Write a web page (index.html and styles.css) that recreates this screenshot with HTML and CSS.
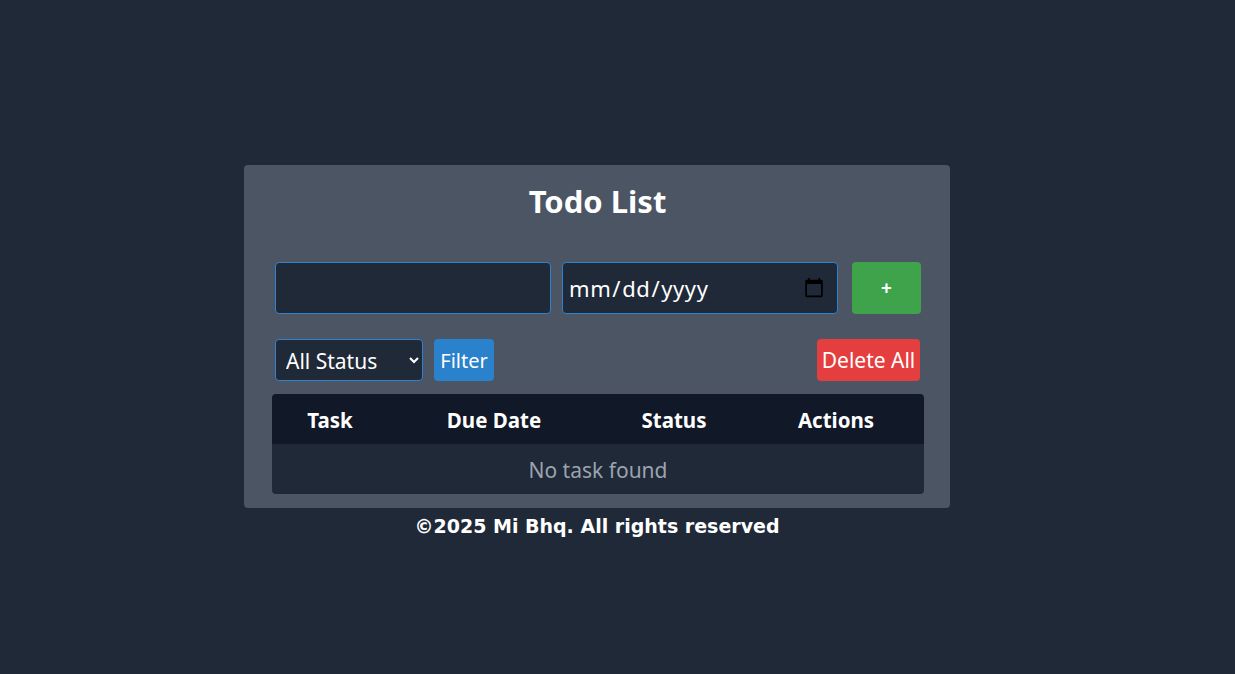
FILE: index.html
```
<!DOCTYPE html>
<html>
<head>
<meta charset="utf-8">
<link rel="stylesheet" href="styles.css">
</head>
<body>
<div class="page">
  <div class="card">
    <h1 class="title">Todo List</h1>
    <div class="add-row">
      <input class="field" type="text">
      <input class="field date" type="date">
      <button class="btn add">+</button>
    </div>
    <div class="filter-row">
      <div class="filter-left">
        <select class="select">
          <option>All Status</option>
        </select>
        <button class="btn filter">Filter</button>
      </div>
      <button class="btn delete">Delete All</button>
    </div>
    <table class="table">
      <colgroup>
        <col class="c1"><col class="c2"><col class="c3"><col class="c4">
      </colgroup>
      <thead>
        <tr><th>Task</th><th>Due Date</th><th>Status</th><th>Actions</th></tr>
      </thead>
      <tbody>
        <tr><td colspan="4" class="empty">No task found</td></tr>
      </tbody>
    </table>
  </div>
  <p class="footer">©2025 Mi Bhq. All rights reserved</p>
</div>
</body>
</html>
```
FILE: styles.css
```
html, body {
  margin: 0;
  padding: 0;
  background: #1f2937;
  font-family: "Noto Sans", "Open Sans", sans-serif;
  color: #fff;
}
.page {
  width: 1194px;
  display: flex;
  flex-direction: column;
  align-items: center;
  padding-top: 165px;
}
.card {
  width: 706px;
  height: 343px;
  box-sizing: border-box;
  background: #4b5563;
  border-radius: 4px;
  padding: 17px 27px 0 28px;
}
.title {
  margin: 0;
  text-align: center;
  font-size: 31px;
  font-weight: 700;
  line-height: 38px;
}
.add-row {
  display: flex;
  align-items: center;
  margin-top: 42px;
  padding: 0 2px 0 3px;
  gap: 11px;
}
.field {
  flex-shrink: 0;
  width: 276px;
  height: 52px;
  box-sizing: border-box;
  background: #1f2937;
  border: 1px solid #3182ce;
  border-radius: 4px;
  color: #fff;
  font-family: inherit;
  font-size: 20px;
  padding: 0 10px;
  outline: none;
}
.date {
  color-scheme: light;
  font-size: 22px;
  padding: 0 10px 0 5px;
  letter-spacing: 0.6px;
}
.btn {
  flex-shrink: 0;
  border: none;
  border-radius: 4px;
  color: #fff;
  font-family: inherit;
  font-size: 20px;
  cursor: pointer;
  padding: 0;
}
.add {
  width: 69px;
  height: 52px;
  margin-left: 3px;
  background: #3ea34b;
  font-size: 19px;
  font-weight: 700;
}
.filter-row {
  display: flex;
  justify-content: space-between;
  align-items: center;
  margin-top: 25px;
  padding: 0 3px;
}
.filter-left {
  display: flex;
  gap: 11px;
}
.select {
  width: 148px;
  height: 42px;
  box-sizing: border-box;
  background: #1f2937;
  color: #fff;
  border: 1px solid #3182ce;
  border-radius: 4px;
  font-family: inherit;
  font-size: 21px;
  padding: 1px 6px 0;
  outline: none;
}
.filter {
  width: 60px;
  height: 42px;
  background: #2b82cc;
}
.delete {
  width: 103px;
  height: 42px;
  background: #e53e3e;
  font-size: 21px;
}
.table {
  width: 652px;
  margin-top: 13px;
  border-collapse: separate;
  border-spacing: 0;
  border-radius: 4px;
  overflow: hidden;
  table-layout: fixed;
}
.c1 { width: 116px; }
.c2 { width: 212px; }
.c3 { width: 148px; }
.c4 { width: 176px; }
.table th {
  background: #111827;
  height: 48px;
  padding: 2px 0 0;
  font-size: 20.5px;
  font-weight: 700;
  text-align: center;
}
.table td {
  background: #1f2937;
  height: 49px;
  padding: 1px 0 0;
  text-align: center;
}
.empty {
  color: #9ca3af;
  font-size: 21px;
}
.footer {
  margin: 5px 0 0;
  font-family: "DejaVu Sans", Verdana, sans-serif;
  font-size: 19px;
  font-weight: 700;
  line-height: 26px;
}
```
